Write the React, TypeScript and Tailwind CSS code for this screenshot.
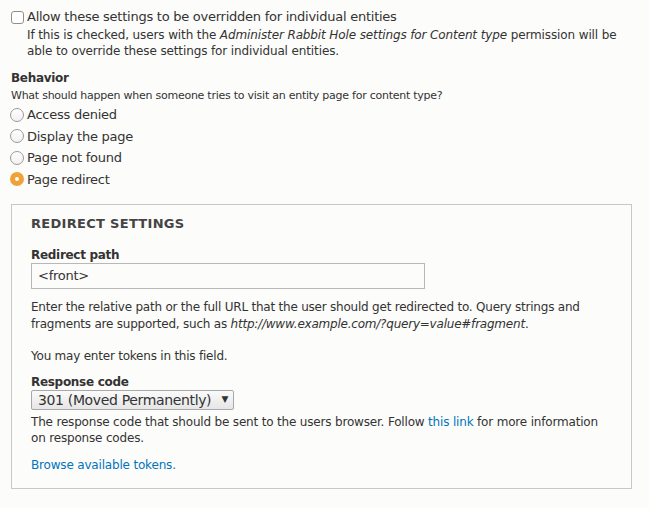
const Radio = ({ label, checked }: { label: string; checked?: boolean }) => (
  <div className="flex h-[21.5px] items-center">
    {checked ? (
      <span className="flex h-[14px] w-[14px] items-center justify-center rounded-full bg-[#f0a23a]">
        <span className="h-[4px] w-[4px] rounded-full bg-white" />
      </span>
    ) : (
      <span className="h-[14px] w-[14px] rounded-full border border-[#9a9a9a] bg-gradient-to-b from-white to-[#f1f1f1]" />
    )}
    <span className="ml-[3px] text-[13px] tracking-[-0.25px]">{label}</span>
  </div>
);

const App = () => {
  return (
    <div className="min-h-screen bg-[#fcfcfa] pl-[10px] pt-[8px] font-['DejaVu_Sans',sans-serif] text-[#333]">
      {/* Override checkbox */}
      <div className="flex h-[18px] items-center">
        <span className="ml-[1px] h-[13px] w-[13px] rounded-[3px] border border-[#8f8f8f] bg-white" />
        <span className="ml-[3px] text-[13px] tracking-[-0.25px]">
          Allow these settings to be overridden for individual entities
        </span>
      </div>
      <p className="mt-[1px] ml-[17px] w-[620px] text-[12px] leading-[16px] tracking-[-0.12px]">
        If this is checked, users with the <em>Administer Rabbit Hole settings for Content type</em> permission will be
        <br />
        able to override these settings for individual entities.
      </p>

      {/* Behavior */}
      <div className="mt-[10px] ml-[1px] text-[12px] font-bold leading-[18px] tracking-[-0.3px]">Behavior</div>
      <p className="mt-[1px] ml-[1px] text-[11px] leading-[16px] tracking-[-0.25px]">
        What should happen when someone tries to visit an entity page for content type?
      </p>
      <div>
        <Radio label="Access denied" />
        <Radio label="Display the page" />
        <Radio label="Page not found" />
        <Radio label="Page redirect" checked />
      </div>

      {/* Redirect settings */}
      <fieldset className="mt-[14px] ml-[1px] w-[621px] border border-[#c8c8c8] pl-[19px] pt-[10px] pb-[15px]">
        <div className="text-[13px] font-bold uppercase leading-[18px] tracking-[0.3px] text-[#444]">
          Redirect settings
        </div>

        <div className="mt-[14px] text-[12px] font-bold leading-[16px] tracking-[-0.3px]">Redirect path</div>
        <div className="flex h-[26px] w-[394px] items-center border border-[#b8b8b8] bg-[#fcfcfa] pl-[6px] text-[13px] tracking-[-0.25px]">
          &lt;front&gt;
        </div>
        <p className="mt-[10px] w-[592px] text-[12px] leading-[17px] tracking-[-0.22px]">
          Enter the relative path or the full URL that the user should get redirected to. Query strings and
          <br />
          fragments are supported, such as <em>http://www.example.com/?query=value#fragment</em>.
        </p>
        <p className="mt-[15px] text-[12px] leading-[17px] tracking-[-0.22px]">You may enter tokens in this field.</p>

        <div className="mt-[9px] text-[12px] font-bold leading-[16px] tracking-[-0.3px]">Response code</div>
        <div className="flex h-[20px] w-[203px] items-center justify-between rounded-[2px] border border-[#a8a8a8] bg-gradient-to-b from-[#fafafa] to-[#e6e6e6] pl-[6px] pr-[5px] text-[14px] tracking-[-0.35px]">
          <span>301 (Moved Permanently)</span>
          <span className="text-[9px]">▼</span>
        </div>
        <p className="mt-[4px] w-[592px] text-[12px] leading-[16px] tracking-[-0.18px]">
          The response code that should be sent to the users browser. Follow{' '}
          <a className="text-[#0074bd]">this link</a> for more information
          <br />
          on response codes.
        </p>
        <p className="mt-[11px] text-[12px] leading-[16px] tracking-[-0.18px]">
          <a className="text-[#0074bd]">Browse available tokens.</a>
        </p>
      </fieldset>
    </div>
  );
};

export default App;
